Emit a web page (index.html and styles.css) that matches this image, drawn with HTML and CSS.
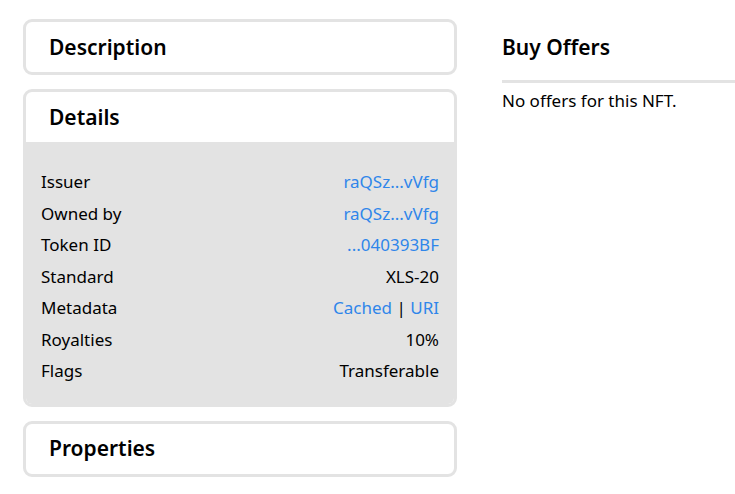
FILE: index.html
```html
<!DOCTYPE html>
<html>
<head>
<meta charset="utf-8">
<link rel="stylesheet" href="styles.css">
</head>
<body>
<div class="page">
  <div class="left">
    <section class="card">
      <div class="card-head"><h2>Description</h2></div>
    </section>
    <section class="card">
      <div class="card-head"><h2>Details</h2></div>
      <div class="card-body">
        <div class="row"><span>Issuer</span><a class="link">raQSz...vVfg</a></div>
        <div class="row"><span>Owned by</span><a class="link">raQSz...vVfg</a></div>
        <div class="row"><span>Token ID</span><a class="link">...040393BF</a></div>
        <div class="row"><span>Standard</span><span>XLS-20</span></div>
        <div class="row"><span>Metadata</span><span><a class="link">Cached</a> | <a class="link">URI</a></span></div>
        <div class="row"><span>Royalties</span><span>10%</span></div>
        <div class="row"><span>Flags</span><span>Transferable</span></div>
      </div>
    </section>
    <section class="card">
      <div class="card-head"><h2>Properties</h2></div>
    </section>
  </div>
  <div class="right">
    <h2 class="right-title">Buy Offers</h2>
    <p class="empty">No offers for this NFT.</p>
  </div>
</div>
</body>
</html>
```
FILE: styles.css
```css
html, body {
  margin: 0;
  padding: 0;
  background: #fff;
  overflow: hidden;
}
body {
  font-family: "Noto Sans", "Open Sans", sans-serif;
  color: #000;
  font-size: 17px;
}
.page {
  display: flex;
  gap: 45px;
  padding: 19px 0 0 23px;
}
.left {
  width: 434px;
  flex: none;
  display: flex;
  flex-direction: column;
  gap: 14px;
}
.card {
  border: 3px solid #e3e3e3;
  border-radius: 9px;
  overflow: hidden;
  background: #fff;
}
.card-head {
  height: 50px;
  display: flex;
  align-items: center;
  padding-left: 23px;
}
.card-head h2 {
  margin: 0;
  font-size: 21px;
  font-weight: 600;
  line-height: 1;
}
.card-body {
  background: #e3e3e3;
  padding: 24px 15px 17px 15px;
}
.row {
  display: flex;
  justify-content: space-between;
  align-items: center;
  height: 31.5px;
  white-space: nowrap;
}
.link {
  color: #2f86ea;
  text-decoration: none;
}
.right {
  flex: 1;
  min-width: 0;
  padding-top: 16px;
}
.right-title {
  margin: 0;
  font-size: 21px;
  font-weight: 600;
  line-height: 24px;
  padding-bottom: 21px;
  border-bottom: 3px solid #e3e3e3;
}
.empty {
  margin: 6px 0 0;
  line-height: 23px;
  white-space: nowrap;
}
```
